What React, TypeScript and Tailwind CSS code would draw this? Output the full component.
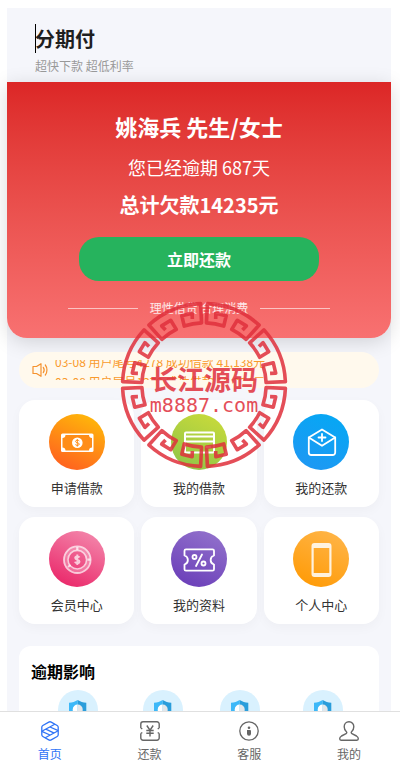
import type { ReactNode } from 'react';

const notices = [
    '03-08 用户尾号4278 成功借款 41,138元',
    '03-08 用户尾号1279 成功借款 18,234元',
];

const MoneyIcon = () => (
    <svg viewBox="0 0 56 56" className="w-14 h-14" fill="none" aria-hidden="true">
        <rect x="12" y="19.500" width="32.500" height="18.500" rx="1.500" fill="#fff" />
        <path d="M16.500 21h23.500c0 1.700 1.300 3 3 3v9.500c-1.700 0-3 1.300-3 3H16.500c0-1.700-1.300-3-3-3V24c1.700 0 3-1.300 3-3z" fill="#ff8d18" />
        <circle cx="28.300" cy="28.800" r="5.300" fill="#fff" />
        <path d="M30.300 27c-.5-1-3.800-1.200-3.800.4 0 1.700 3.800 1 3.800 2.700 0 1.700-3.400 1.600-4 .4M28.300 25v7.600" stroke="#ff8d18" strokeWidth="1" />
    </svg>
);

const CardIcon = () => (
    <svg viewBox="0 0 56 56" className="w-14 h-14" fill="none" stroke="#fff" aria-hidden="true">
        <rect x="14" y="18.500" width="29" height="20" rx="1" strokeWidth="2" />
        <path d="M14 22.500h29M14 27.500h29" strokeWidth="2" />
        <path d="M34.500 33h5.500" strokeWidth="2" />
    </svg>
);

const EnvelopeIcon = () => (
    <svg viewBox="0 0 56 56" className="w-14 h-14" fill="none" stroke="#fff" strokeWidth="1.800" strokeLinejoin="round" strokeLinecap="round" aria-hidden="true">
        <path d="M15.800 23.500 29 15.500l13.200 8V38.500a2.500 2.500 0 0 1-2.500 2.500H18.300a2.500 2.500 0 0 1-2.500-2.500z" />
        <path d="m15.800 23.500 13.200 8.300 13.200-8.300M29 20v7M25.500 23.500h7" />
    </svg>
);

const CoinIcon = () => (
    <svg viewBox="0 0 56 56" className="w-14 h-14" fill="none" stroke="#fff" strokeOpacity=".7" aria-hidden="true">
        <circle cx="28.300" cy="28.700" r="13.300" strokeWidth="1.800" />
        <circle cx="28.300" cy="28.700" r="9.300" strokeWidth="1.600" />
        <circle cx="28.300" cy="28.700" r="11.300" strokeWidth="3" strokeOpacity=".25" />
        <path d="M28.300 16v3M38.500 28.700h3M19 36l2.500-2" strokeWidth="2.200" />
        <path d="M30.500 26.500c-.7-1.600-4.300-1.600-4.300.4 0 2.200 4.300 1.500 4.300 3.700 0 2.200-4 2-4.600.2M28.300 23.500v10.500" strokeWidth="1.900" />
    </svg>
);

const TicketIcon = () => (
    <svg viewBox="0 0 56 56" className="w-14 h-14" fill="none" stroke="#fff" strokeWidth="1.800" strokeLinejoin="round" strokeLinecap="round" aria-hidden="true">
        <path d="M15 18.300h26.500a1.500 1.500 0 0 1 1.500 1.500v4.700a4.700 4.700 0 0 0 0 9v4.700a1.500 1.500 0 0 1-1.500 1.500H15a1.500 1.500 0 0 1-1.500-1.500v-4.700a4.700 4.700 0 0 0 0-9v-4.700a1.500 1.500 0 0 1 1.500-1.500z" />
        <path d="m31 23.500-6 11.500" />
        <circle cx="23.500" cy="26" r="2" />
        <circle cx="32.500" cy="32.500" r="2" />
    </svg>
);

const PhoneIcon = () => (
    <svg viewBox="0 0 56 56" className="w-14 h-14" aria-hidden="true">
        <path fillRule="evenodd" fill="#fff" fillOpacity=".85" d="M21.500 12h14a3 3 0 0 1 3 3v28a3 3 0 0 1-3 3h-14a3 3 0 0 1-3-3V15a3 3 0 0 1 3-3zm-.8 5v25h15.600V17z" />
    </svg>
);

const SpeakerIcon = () => (
    <svg viewBox="0 0 16 14" className="w-4 h-3.5 shrink-0" fill="none" stroke="#f5922f" strokeWidth="1.200" strokeLinejoin="round" strokeLinecap="round" aria-hidden="true">
        <path d="M1 3.500h3.500L9 .7v12.600l-4.500-2.800H1z" />
        <path d="M11.300 4.300c1 1.500 1 3.900 0 5.400M13.300 2c2.200 2.700 2.200 7.300 0 10" />
    </svg>
);

const ShieldIcon = () => (
    <svg viewBox="0 0 40 40" className="w-10 h-10" aria-hidden="true">
        <circle cx="20" cy="20" r="20" fill="#d9f1fe" />
        <path d="M19.700 10c-2.500 1.700-5.500 2.500-8.700 2.700V21c0 5.500 4 8.500 8.700 10.500z" fill="#3db8f8" />
        <path d="M19.700 10c2.500 1.700 5.500 2.500 8.600 2.700V21c0 5.500-4 8.500-8.600 10.500z" fill="#2a9ddb" />
        <path d="M19.700 14.500a5 5 0 0 0-5 5c0 4 2 6 5 7.500z" fill="#fff" />
        <path d="M19.700 14.500a5 5 0 0 1 5 5c0 4-2 6-5 7.500z" fill="#e3e7ea" />
    </svg>
);

const HomeIcon = () => (
    <svg viewBox="0 0 20 20" className="w-5 h-5" fill="none" stroke="currentColor" strokeWidth="1.300" strokeLinejoin="round" aria-hidden="true">
        <path d="M8.800 1.100a2.400 2.400 0 0 1 2.400 0l6 3.400a2 2 0 0 1 1 1.800v7.400a2 2 0 0 1-1 1.800l-6 3.400a2.400 2.400 0 0 1-2.400 0l-6-3.400a2 2 0 0 1-1-1.800V6.300a2 2 0 0 1 1-1.800z" />
        <path d="M1.800 10.300 14.800 3.200M18.200 9.700 5.200 16.800M5.800 8.100l8.400 4M10 6l8.200 3.700M1.800 10.300 10 14" />
    </svg>
);

const YenIcon = () => (
    <svg viewBox="0 0 20 20" className="w-5 h-5" fill="none" stroke="currentColor" strokeWidth="1.400" aria-hidden="true">
        <path d="M.8 7V3A2.200 2.200 0 0 1 3 .8h14A2.200 2.200 0 0 1 19.200 3v4M19.200 12.500V17a2.200 2.200 0 0 1-2.200 2.200H3A2.200 2.200 0 0 1 .8 17v-4.500M.8 7l1.500 1M.8 12.500l1.500-1M19.200 7l-1.500 1M19.200 12.500l-1.500-1" />
        <path d="m6.800 4.500 3.200 4.700 3.200-4.700M10 9.200V15.500M6.300 9.500h7.400M6.300 12.300h7.400" />
    </svg>
);

const ServiceIcon = () => (
    <svg viewBox="0 0 20 20" className="w-5 h-5" fill="none" stroke="currentColor" strokeWidth="1.300" aria-hidden="true">
        <circle cx="10" cy="10" r="9.200" />
        <circle cx="10" cy="6.800" r="1.300" fill="currentColor" stroke="none" />
        <path d="M8 9h3a1 1 0 0 1 1 1v2.800a1.900 1.900 0 0 1-4 0V10.500z" fill="currentColor" stroke="none" />
    </svg>
);

const UserIcon = () => (
    <svg viewBox="0 0 20 20" className="w-5 h-5" fill="none" stroke="currentColor" strokeWidth="1.400" strokeLinejoin="round" aria-hidden="true">
        <path d="M10 .8c-2.900 0-4.800 2.200-4.800 5 0 2 .8 3.700 2.200 4.900.6.600.5 1.600-.3 2L2.500 15C1.200 15.700.7 16.700.7 17.800c0 .9.500 1.400 1.300 1.400h16c.8 0 1.300-.5 1.300-1.400 0-1.100-.5-2.100-1.800-2.800l-4.600-2.300c-.8-.4-.9-1.400-.3-2 1.400-1.200 2.200-2.900 2.200-4.900 0-2.800-1.900-5-4.800-5z" />
    </svg>
);

const services: { label: string; color: string; icon: ReactNode }[] = [
    { label: '申请借款', color: 'from-[#ff5722] to-[#ffc107]', icon: <MoneyIcon /> },
    { label: '我的借款', color: 'from-[#8bc34a] to-[#cddc39]', icon: <CardIcon /> },
    { label: '我的还款', color: 'from-[#2196f3] to-[#03a9f4]', icon: <EnvelopeIcon /> },
    { label: '会员中心', color: 'from-[#e91e63] to-[#f48fb1]', icon: <CoinIcon /> },
    { label: '我的资料', color: 'from-[#673ab7] to-[#9575cd]', icon: <TicketIcon /> },
    { label: '个人中心', color: 'from-[#ff9800] to-[#ffb74d]', icon: <PhoneIcon /> },
];

const tabs: { label: string; icon: ReactNode; active?: boolean }[] = [
    { label: '首页', icon: <HomeIcon />, active: true },
    { label: '还款', icon: <YenIcon /> },
    { label: '客服', icon: <ServiceIcon /> },
    { label: '我的', icon: <UserIcon /> },
];

// Each sector is one outer arc with a fret hook folded in at both ends
const Seal = () => (
    <div className="absolute left-1/2 top-[293px] ml-[5px] w-42 h-42 -translate-x-1/2 pointer-events-none text-[#e0303c] opacity-85">
        <svg viewBox="-84 -84 168 168" className="absolute inset-0 w-full h-full" fill="none" stroke="currentColor" strokeWidth="3.600" strokeLinejoin="round" aria-hidden="true">
            {[0, 1, 2, 3, 4, 5, 6, 7].map((i) => (
                <path
                    key={i}
                    transform={`rotate(${22.5 + i * 45})`}
                    d="M-14.500-65.500-16.500-70.800-6-72.500-4.300-62A62 62 0 0 0-21.500-58.300L-28-76.500A81.500 81.500 0 0 1 28-76.500L21.500-58.300A62 62 0 0 0 4.300-62L6-72.500 16.500-70.800 14.500-65.500"
                />
            ))}
        </svg>
        <div className="h-full pt-[62px] flex flex-col items-center">
            <p className="text-[27px] leading-8 font-bold whitespace-nowrap">长江源码</p>
            <p className="font-['DejaVu_Sans_Mono',monospace] text-[20px] leading-5">m8887.com</p>
        </div>
    </div>
);

export default function App() {
    return (
        <div className="h-screen flex flex-col bg-white font-['Noto_Sans_CJK_SC',sans-serif] overflow-hidden">
            <div className="flex-1 min-h-0 overflow-y-auto [scrollbar-width:none] pt-2 pl-[7px] pr-[9px]">
                <main className="relative min-h-full bg-[#f5f6fb]">
                    {/* Header */}
                    <header className="pt-4 pl-7 pb-2">
                        <h1 className="relative text-[20px] leading-[29px] font-bold text-[#1f1f1f]">
                            <span className="absolute left-0 inset-y-0 w-px bg-black" />
                            分期付
                        </h1>
                        <p className="mt-1 text-xs leading-[17px] text-[#999]">超快下款 超低利率</p>
                    </header>

                    {/* Overdue card */}
                    <section className="flex flex-col items-center rounded-b-[20px] bg-linear-to-b from-[#dc2626] to-[#f87171] pt-7 pb-[21px] text-white shadow-[0_4px_20px_rgba(0,0,0,0.15)]">
                        <h2 className="text-[22px] leading-8 font-bold">姚海兵 先生/女士</h2>
                        <p className="mt-3 text-[18px] leading-[26px]">您已经逾期 687天</p>
                        <p className="mt-2.5 text-[20px] leading-[29px] font-bold">总计欠款14235元</p>
                        <button type="button" className="mt-[18px] w-60 h-11 rounded-[20px] bg-[#26b35d] text-base font-bold">立即还款</button>
                        <div className="mt-[18px] flex items-center gap-3 text-xs leading-[18px] text-white/85">
                            <span className="w-[70px] h-px bg-white/60" />
                            <span>理性借贷 合理消费</span>
                            <span className="w-[70px] h-px bg-white/60" />
                        </div>
                    </section>

                    <div className="px-3 pb-4">
                        {/* Notice ticker */}
                        <div className="mt-3.5 flex h-9 items-center gap-[7px] rounded-full bg-[#fff9ed] pl-[13px] pr-4">
                            <SpeakerIcon />
                            <div className="h-5 flex-1 overflow-hidden">
                                <ul className="-mt-2 text-xs text-[#f99a2c]">
                                    {notices.map((text) => (
                                        <li key={text} className="h-5 leading-5 whitespace-nowrap">{text}</li>
                                    ))}
                                </ul>
                            </div>
                        </div>

                        {/* Services */}
                        <div className="mt-3 grid grid-cols-3 gap-x-[7px] gap-y-2.5">
                            {services.map((s) => (
                                <button key={s.label} type="button" className="flex flex-col items-center rounded-2xl bg-white pt-3.5 pb-2.5 shadow-[0_4px_12px_rgba(0,0,0,0.03)]">
                                    <span className={`w-14 h-14 rounded-full bg-linear-[25deg] ${s.color}`}>{s.icon}</span>
                                    <span className="mt-2 text-[13px] leading-[19px] text-[#333]">{s.label}</span>
                                </button>
                            ))}
                        </div>

                        {/* Overdue impact */}
                        <section className="mt-[22px] rounded-xl bg-white px-3 pt-3.5 pb-6">
                            <h3 className="text-base leading-[23px] font-bold text-black">逾期影响</h3>
                            <div className="mt-[7px] flex justify-around">
                                <span className="flex w-16 justify-center"><ShieldIcon /></span>
                                <span className="flex w-12 justify-center"><ShieldIcon /></span>
                                <span className="flex w-12 justify-center"><ShieldIcon /></span>
                                <span className="flex w-15 justify-center"><ShieldIcon /></span>
                            </div>
                        </section>
                    </div>

                    <Seal />
                </main>
            </div>

            {/* Tab bar */}
            <nav className="grid grid-cols-4 border-t border-[#e0e0e0] bg-white pr-px">
                {tabs.map((tab) => (
                    <a key={tab.label} href="#" className={`flex flex-col items-center pt-[9px] pb-[7px] ${tab.active ? 'text-[#2f73f6]' : 'text-[#666]'}`}>
                        {tab.icon}
                        <span className="mt-1 text-xs leading-[17px]">{tab.label}</span>
                    </a>
                ))}
            </nav>
        </div>
    );
}
